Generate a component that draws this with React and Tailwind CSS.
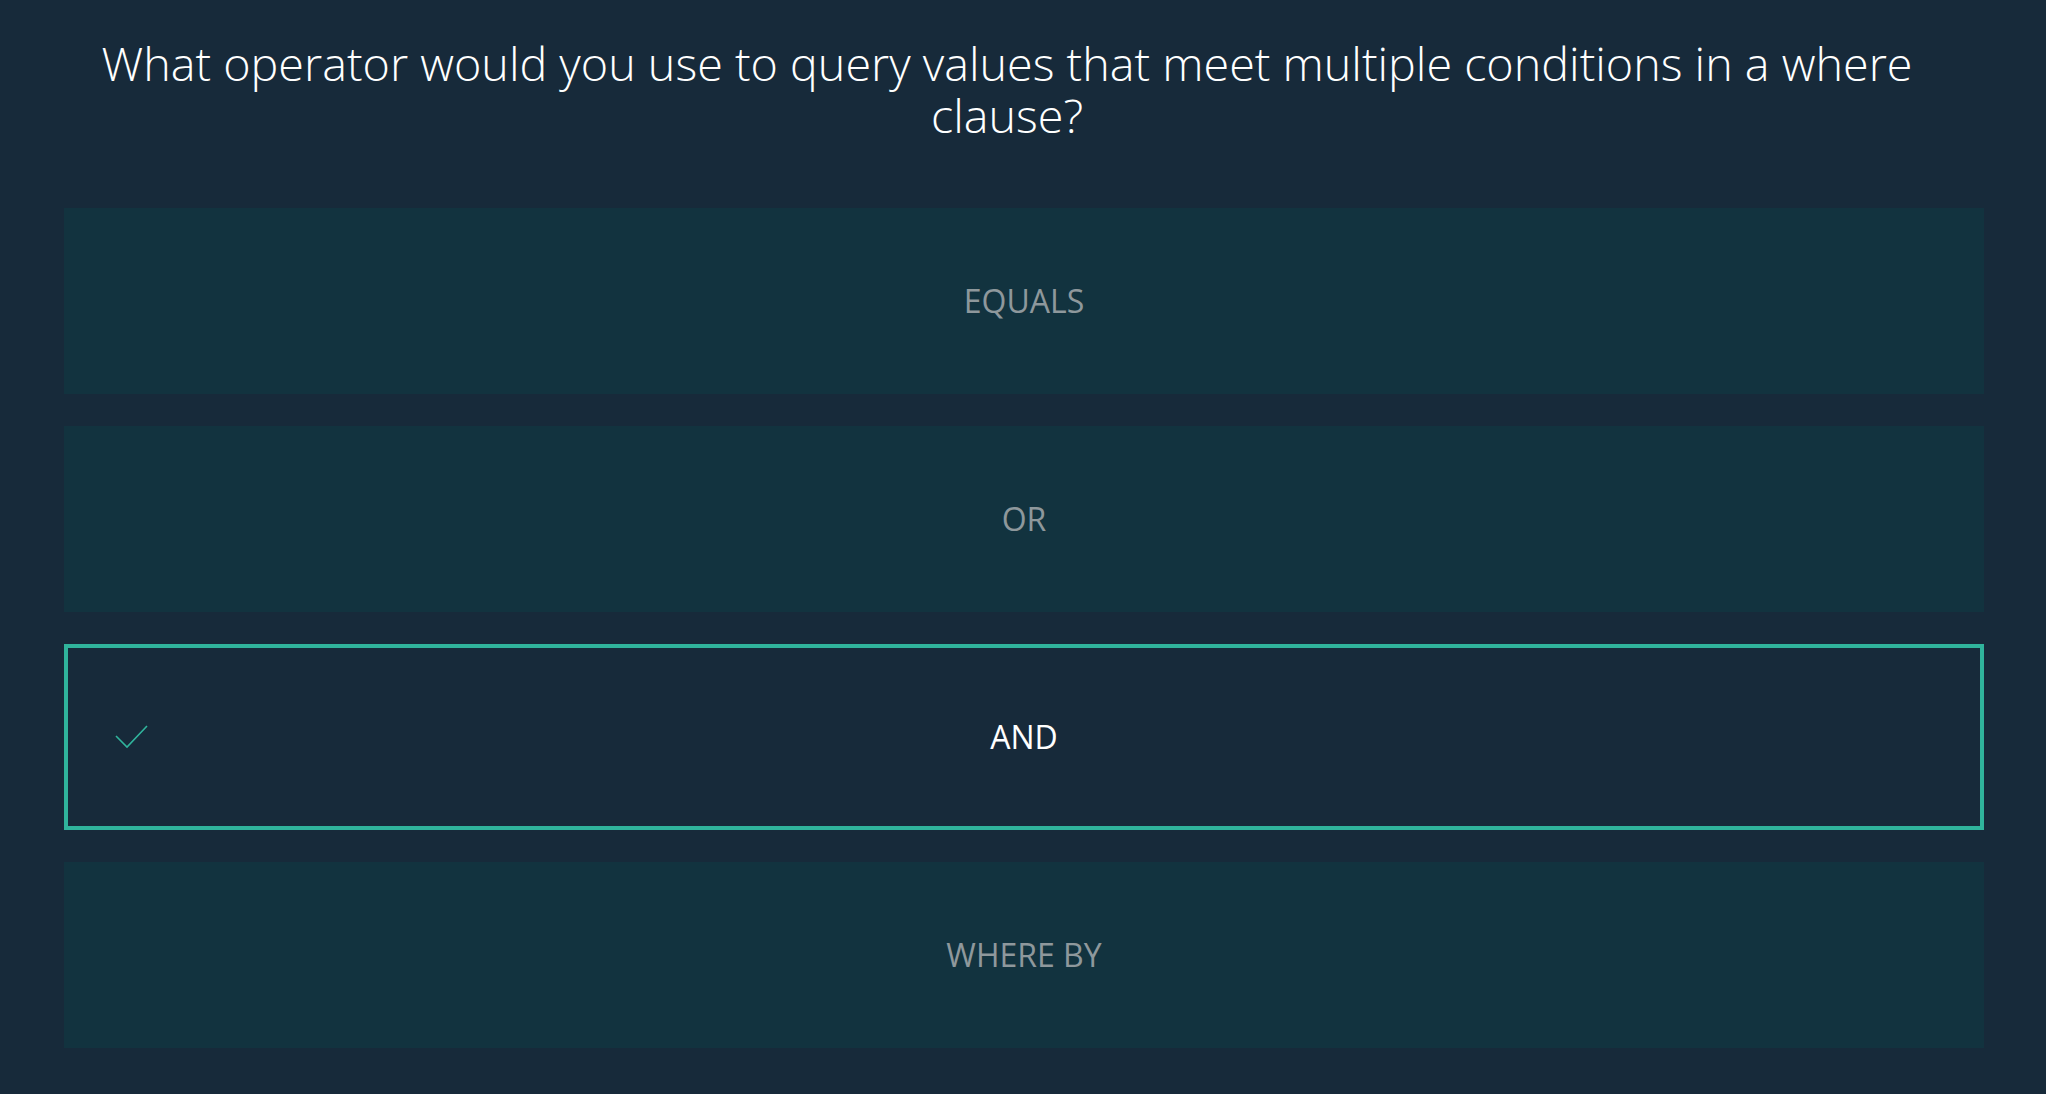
import React, { useState } from "react";

const options = ["EQUALS", "OR", "AND", "WHERE BY"];

const Check = () => (
  <svg width="34" height="26" viewBox="0 0 34 26" fill="none" className="absolute left-[46px] top-1/2 -translate-y-1/2">
    <path d="M2 12 L13 23 L33 2" stroke="#30b49c" strokeWidth="1.6" />
  </svg>
);

const App = () => {
  const [selected, setSelected] = useState("AND");

  return (
    <div className="bg-[#172a3a] min-h-screen w-full font-['Open_Sans',sans-serif]">
      <div className="pl-16 pr-[62px] pt-[37px]">
        <div className="pr-[34px]">
          <h1 className="mx-auto max-w-[1860px] text-center text-white text-[46.7px] leading-[52px] font-light">
            What operator would you use to query values that meet multiple conditions in a where clause?
          </h1>
        </div>

        <div className="flex flex-col gap-8 mt-[67px]">
          {options.map((option) => {
            const active = option === selected;
            return (
              <button
                key={option}
                onClick={() => setSelected(option)}
                className={
                  active
                    ? "relative h-[186px] w-full flex items-center justify-center border-4 border-[#30b49c] bg-[#172a3a] text-white text-[32px]"
                    : "relative h-[186px] w-full flex items-center justify-center bg-[#12333f] text-[#8e989c] text-[32px]"
                }
              >
                {active && <Check />}
                {option}
              </button>
            );
          })}
        </div>
      </div>
    </div>
  );
};

export default App;
